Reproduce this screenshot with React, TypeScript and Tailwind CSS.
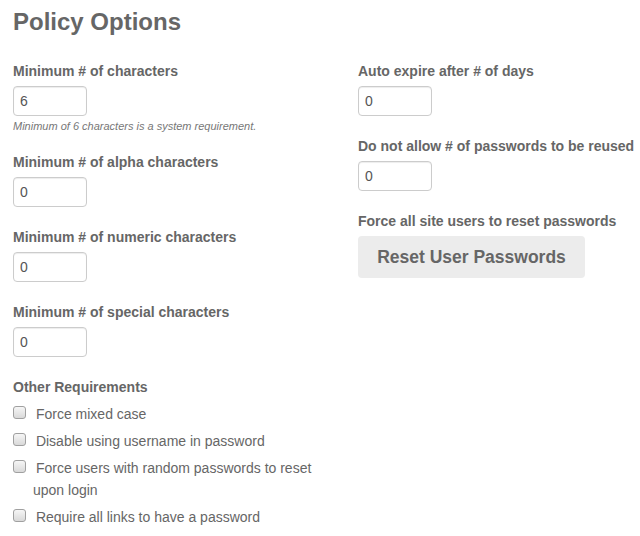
const leftFields = [
  { label: 'Minimum # of characters', value: '6', hint: 'Minimum of 6 characters is a system requirement.' },
  { label: 'Minimum # of alpha characters', value: '0' },
  { label: 'Minimum # of numeric characters', value: '0' },
  { label: 'Minimum # of special characters', value: '0' },
];

const rightFields = [
  { label: 'Auto expire after # of days', value: '0' },
  { label: 'Do not allow # of passwords to be reused', value: '0' },
];

const requirements = [
  'Force mixed case',
  'Disable using username in password',
  'Force users with random passwords to reset upon login',
  'Require all links to have a password',
];

function Field({ label, value, hint, first }: { label: string; value: string; hint?: string; first?: boolean }) {
  return (
    <div className={first ? '' : 'mt-5'}>
      <label className="block text-[14px] leading-[20px] font-bold text-[#666] whitespace-nowrap">{label}</label>
      <input
        defaultValue={value}
        className="mt-[5px] block w-[74px] h-[30px] px-[6px] rounded-[4px] border border-[#ccc] bg-white text-[14px] text-[#555] shadow-[inset_0_1px_1px_rgba(0,0,0,0.075)] outline-none"
      />
      {hint && <p className="mt-[2px] text-[11px] leading-[16px] italic text-[#777] -mb-[2px]">{hint}</p>}
    </div>
  );
}

export default function App() {
  return (
    <div className="w-[640px] h-[536px] bg-white pl-[13px] pt-[9px] font-['Liberation_Sans',Arial,sans-serif] overflow-hidden">
      <h1 className="text-[24px] leading-[26px] font-bold text-[#666]">Policy Options</h1>

      <div className="flex mt-[26px]">
        <div className="w-[345px] pr-[15px] flex-shrink-0">
          {leftFields.map((f, i) => (
            <Field key={f.label} {...f} first={i === 0} />
          ))}

          <div className="mt-5">
            <div className="text-[14px] leading-[20px] font-bold text-[#666]">Other Requirements</div>
            <div className="mt-[6px] flex flex-col gap-[5px]">
              {requirements.map((r) => (
                <label key={r} className="block pl-[20px] text-[14px] leading-[22px] text-[#666]">
                  <span className="inline-block w-[13px] h-[13px] -ml-[20px] mr-[6px] rounded-[3px] border border-[#a0a0a0] bg-gradient-to-b from-[#f6f6f6] to-[#d9d9d9]" />{' '}
                  {r}
                </label>
              ))}
            </div>
          </div>
        </div>

        <div className="flex-1">
          {rightFields.map((f, i) => (
            <Field key={f.label} {...f} first={i === 0} />
          ))}
          <div className="mt-5">
            <div className="text-[14px] leading-[20px] font-bold text-[#666] whitespace-nowrap">Force all site users to reset passwords</div>
            <button className="mt-[5px] w-[227px] h-[42px] rounded-[4px] bg-[#ececec] text-[17.5px] font-bold text-[#666]">
              Reset User Passwords
            </button>
          </div>
        </div>
      </div>
    </div>
  );
}
